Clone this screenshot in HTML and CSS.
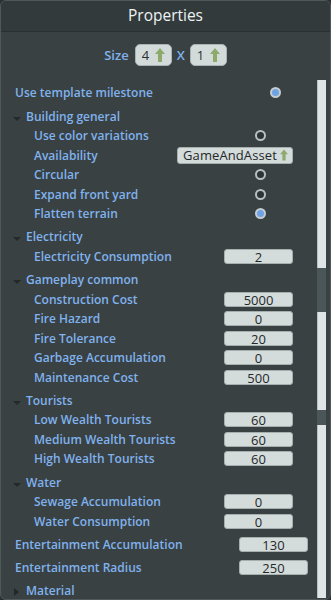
FILE: index.html
```html
<!DOCTYPE html>
<html lang="en">
<head>
    <meta charset="UTF-8">
    <meta name="viewport" content="width=device-width, initial-scale=1.0">
    <link rel="stylesheet" href="styles.css">
    <title>Properties</title>
</head>
<body>
    <div class="panel">
        <div class="title">Properties</div>

        <div class="size-row">
            <span class="size-label">Size</span>
            <span class="spin">4
                <svg class="up" viewBox="0 0 10 14"><path d="M5 0 L10 6 L7 6 L7 14 L3 14 L3 6 L0 6 Z"/></svg>
            </span>
            <span class="size-x">X</span>
            <span class="spin">1
                <svg class="up" viewBox="0 0 10 14"><path d="M5 0 L10 6 L7 6 L7 14 L3 14 L3 6 L0 6 Z"/></svg>
            </span>
        </div>

        <div class="body">
            <div class="list">
                <div class="row top">
                    <span class="label">Use template milestone</span>
                    <span class="ctl"><span class="radio on"></span></span>
                </div>

                <!-- Building general -->
                <div class="group">
                    <div class="group-head"><span class="tri"></span>Building general</div>
                    <div class="children">
                        <div class="row">
                            <span class="label">Use color variations</span>
                            <span class="ctl"><span class="radio"></span></span>
                        </div>
                        <div class="row">
                            <span class="label">Availability</span>
                            <span class="drop">GameAndAsset
                                <svg class="up small" viewBox="0 0 10 14"><path d="M5 0 L10 6 L7 6 L7 14 L3 14 L3 6 L0 6 Z"/></svg>
                            </span>
                        </div>
                        <div class="row">
                            <span class="label">Circular</span>
                            <span class="ctl"><span class="radio"></span></span>
                        </div>
                        <div class="row">
                            <span class="label">Expand front yard</span>
                            <span class="ctl"><span class="radio"></span></span>
                        </div>
                        <div class="row">
                            <span class="label">Flatten terrain</span>
                            <span class="ctl"><span class="radio on"></span></span>
                        </div>
                    </div>
                </div>

                <!-- Electricity -->
                <div class="group">
                    <div class="group-head"><span class="tri"></span>Electricity</div>
                    <div class="children">
                        <div class="row">
                            <span class="label">Electricity Consumption</span>
                            <span class="ctl"><span class="field">2</span></span>
                        </div>
                    </div>
                </div>

                <!-- Gameplay common -->
                <div class="group">
                    <div class="group-head"><span class="tri"></span>Gameplay common</div>
                    <div class="children">
                        <div class="row">
                            <span class="label">Construction Cost</span>
                            <span class="ctl"><span class="field">5000</span></span>
                        </div>
                        <div class="row">
                            <span class="label">Fire Hazard</span>
                            <span class="ctl"><span class="field">0</span></span>
                        </div>
                        <div class="row">
                            <span class="label">Fire Tolerance</span>
                            <span class="ctl"><span class="field">20</span></span>
                        </div>
                        <div class="row">
                            <span class="label">Garbage Accumulation</span>
                            <span class="ctl"><span class="field">0</span></span>
                        </div>
                        <div class="row">
                            <span class="label">Maintenance Cost</span>
                            <span class="ctl"><span class="field">500</span></span>
                        </div>
                    </div>
                </div>

                <!-- Tourists -->
                <div class="group">
                    <div class="group-head"><span class="tri"></span>Tourists</div>
                    <div class="children">
                        <div class="row">
                            <span class="label">Low Wealth Tourists</span>
                            <span class="ctl"><span class="field">60</span></span>
                        </div>
                        <div class="row">
                            <span class="label">Medium Wealth Tourists</span>
                            <span class="ctl"><span class="field">60</span></span>
                        </div>
                        <div class="row">
                            <span class="label">High Wealth Tourists</span>
                            <span class="ctl"><span class="field">60</span></span>
                        </div>
                    </div>
                </div>

                <!-- Water -->
                <div class="group">
                    <div class="group-head"><span class="tri"></span>Water</div>
                    <div class="children">
                        <div class="row">
                            <span class="label">Sewage Accumulation</span>
                            <span class="ctl"><span class="field">0</span></span>
                        </div>
                        <div class="row">
                            <span class="label">Water Consumption</span>
                            <span class="ctl"><span class="field">0</span></span>
                        </div>
                    </div>
                </div>

                <div class="row top spaced">
                    <span class="label">Entertainment Accumulation</span>
                    <span class="ctl"><span class="field">130</span></span>
                </div>
                <div class="row top spaced">
                    <span class="label">Entertainment Radius</span>
                    <span class="ctl"><span class="field">250</span></span>
                </div>

                <div class="group">
                    <div class="group-head"><span class="tri closed"></span>Material</div>
                </div>
            </div>

            <div class="scroll">
                <div class="track t1"></div>
                <div class="thumb t2"></div>
                <div class="track t3"></div>
                <div class="thumb t4"></div>
                <div class="track t5"></div>
            </div>
        </div>
    </div>
</body>
</html>
```

FILE: styles.css
```css
*{
    box-sizing: border-box;
}
body{
    margin: 0;
    background-color: #2b3133;
    font-family: "Open Sans", "DejaVu Sans", sans-serif;
}
.panel{
    width: 331px;
    height: 600px;
    border: 1px solid #4f585a;
    border-radius: 6px;
    background-color: #394142;
    overflow: hidden;
}
.title{
    height: 31px;
    line-height: 29px;
    text-align: center;
    font-size: 15.5px;
    color: #eef2f3;
    background-color: #323a3c;
    border-bottom: 1px solid #2a3032;
}

/* size row */
.size-row{
    height: 48px;
    padding-top: 12px;
    display: flex;
    justify-content: center;
    align-items: flex-start;
    gap: 5px;
}
.size-label, .size-x{
    line-height: 22px;
    font-size: 13px;
    font-weight: 600;
    color: #80b2ee;
}
.size-label{
    margin-right: 1px;
}
.spin{
    width: 37px;
    height: 22px;
    display: flex;
    align-items: center;
    justify-content: space-between;
    padding: 0 6px 0 6px;
    border-radius: 5px;
    background-color: #d3dada;
    border: 1px solid #aab3b3;
    font-size: 13px;
    color: #2a2f30;
}
.up{
    width: 10px;
    height: 14px;
    flex-shrink: 0;
    fill: #8daa6c;
}
.up.small{
    width: 8px;
    height: 12px;
}

/* list */
.body{
    display: flex;
    padding-right: 4px;
}
.list{
    flex: 1;
    padding: 3px 9px 0 14px;
}
.row{
    height: 19.5px;
    display: flex;
    align-items: center;
}
.row.spaced{
    margin-top: 3.75px;
}
.label{
    flex: 1;
    font-size: 12px;
    font-weight: 600;
    color: #80b2ee;
    white-space: nowrap;
}
.ctl{
    width: 70px;
    display: flex;
    justify-content: center;
    padding-left: 5px;
}
.group{
    margin-top: 3.75px;
}
.group-head{
    height: 19.5px;
    display: flex;
    align-items: center;
    margin-left: -2px;
    font-size: 12px;
    font-weight: 600;
    color: #80b2ee;
}
.tri{
    width: 0;
    height: 0;
    margin: 5px 5px 0 0;
    border-left: 4px solid transparent;
    border-right: 4px solid transparent;
    border-top: 4.5px solid #232828;
}
.tri.closed{
    margin: 3px 7px 0 1px;
    border-top: 4px solid transparent;
    border-bottom: 4px solid transparent;
    border-left: 5px solid #232828;
    border-right: none;
}
.children{
    margin-left: 19px;
    margin-right: 15px;
}

/* controls */
.radio{
    width: 11px;
    height: 11px;
    border-radius: 50%;
    border: 2px solid #b7bfbf;
    background-color: #2e3436;
}
.radio.on{
    border-color: #c4ccd0;
    background-color: #6ea2e4;
}
.field{
    width: 70px;
    height: 15px;
    line-height: 14px;
    text-align: center;
    font-size: 13px;
    color: #242829;
    background-color: #d4dbdb;
    border: 1px solid #a6aeae;
    border-radius: 3px;
}
.ctl .field{
    margin-left: -4px;
}
.drop{
    width: 116px;
    height: 17px;
    display: flex;
    align-items: center;
    justify-content: space-between;
    padding: 0 4px 0 5px;
    font-size: 13px;
    letter-spacing: 0.1px;
    color: #242829;
    background-color: #d4dbdb;
    border: 1px solid #a6aeae;
    border-radius: 3px;
}

/* scrollbar */
.scroll{
    width: 9px;
    height: 518px;
    display: flex;
    flex-direction: column;
}
.track{
    background-color: #dfe5e7;
    border-left: 1px solid #b8c0c2;
}
.thumb{
    background-color: #4a5658;
}
.t1{ height: 188px; }
.t2{ height: 44px; }
.t3{ height: 98px; }
.t4{ height: 15px; }
.t5{ flex: 1; }
```
